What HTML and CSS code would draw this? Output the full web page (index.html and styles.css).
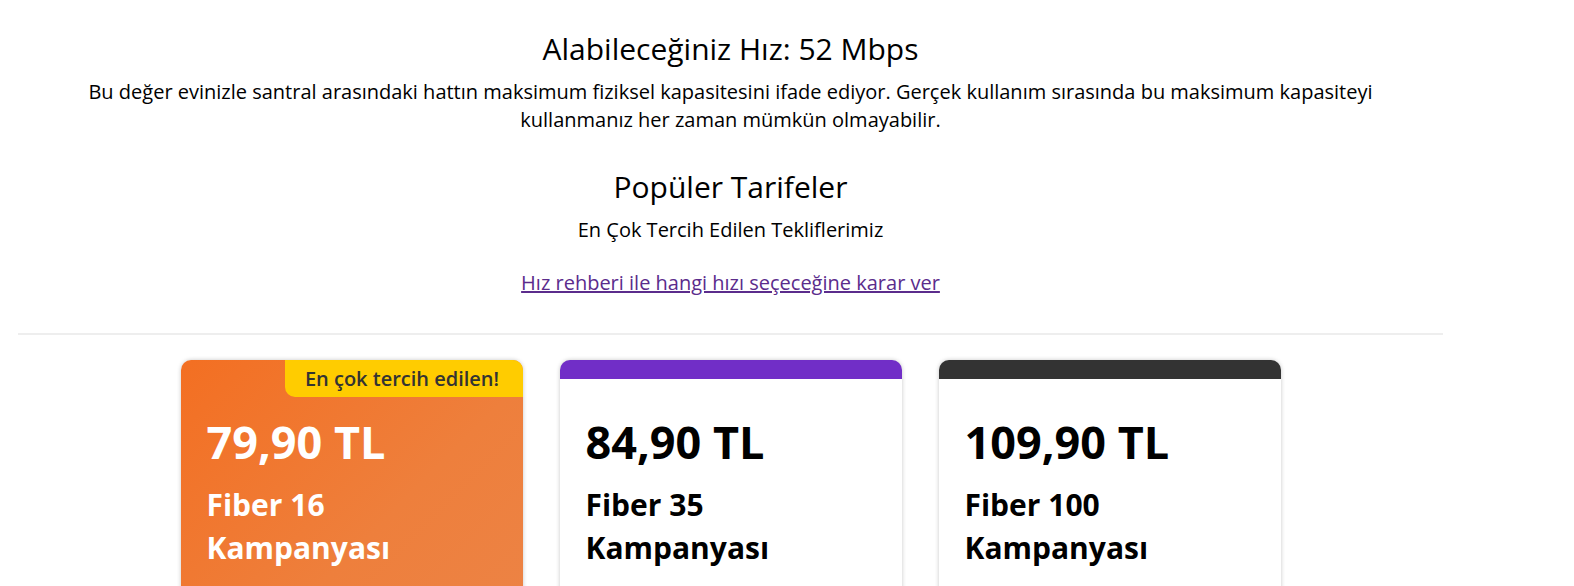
FILE: index.html
```html
<!DOCTYPE html>
<html lang="tr">
<head>
<meta charset="utf-8">
<title>Popüler Tarifeler</title>
<link rel="stylesheet" href="styles.css">
</head>
<body>
<div class="section">
  <h1 class="speed-title">Alabileceğiniz Hız: 52 Mbps</h1>
  <p class="speed-desc">Bu değer evinizle santral arasındaki hattın maksimum fiziksel kapasitesini ifade ediyor. Gerçek kullanım sırasında bu maksimum kapasiteyi kullanmanız her zaman mümkün olmayabilir.</p>
  <h2 class="pop-title">Popüler Tarifeler</h2>
  <p class="pop-sub">En Çok Tercih Edilen Tekliflerimiz</p>
  <p class="guide"><a class="guide-link" href="#">Hız rehberi ile hangi hızı seçeceğine karar ver</a></p>
  <hr class="divider">
  <div class="cards">
    <div class="card card-featured">
      <span class="badge">En çok tercih edilen!</span>
      <div class="card-body">
        <div class="price">79,90 TL</div>
        <div class="name">Fiber 16<br>Kampanyası</div>
      </div>
    </div>
    <div class="card card-purple">
      <div class="card-body">
        <div class="price">84,90 TL</div>
        <div class="name">Fiber 35<br>Kampanyası</div>
      </div>
    </div>
    <div class="card card-dark">
      <div class="card-body">
        <div class="price">109,90 TL</div>
        <div class="name">Fiber 100<br>Kampanyası</div>
      </div>
    </div>
  </div>
</div>
</body>
</html>
```

FILE: styles.css
```css
html, body {
  margin: 0;
  padding: 0;
  background: #fff;
  overflow: hidden;
}
body {
  font-family: "Open Sans", "Noto Sans", sans-serif;
  color: #000;
  height: 586px;
}
.section {
  width: 1425px;
  margin-left: 18px;
  text-align: center;
  padding-top: 28px;
}
.speed-title {
  font-size: 30px;
  font-weight: 400;
  line-height: 42px;
  margin: 0;
}
.speed-desc {
  font-size: 20px;
  line-height: 28px;
  max-width: 1320px;
  margin: 8px auto 0;
}
.pop-title {
  font-size: 30px;
  font-weight: 400;
  line-height: 42px;
  margin: 32px 0 0;
}
.pop-sub {
  font-size: 20px;
  line-height: 28px;
  margin: 8px 0 0;
}
.guide {
  font-size: 20px;
  line-height: 28px;
  margin: 25px 0 0;
}
.guide-link {
  color: #5b2c8c;
  text-decoration: underline;
}
.divider {
  border: 0;
  border-top: 2px solid #eeeeee;
  margin: 36px 0 0;
}
.cards {
  display: flex;
  gap: 37px;
  width: 1100px;
  margin: 25px auto 0;
  text-align: left;
}
.card {
  position: relative;
  width: 342px;
  height: 300px;
  border-radius: 10px;
  background: #fff;
  box-shadow: 0 0 4px rgba(0, 0, 0, 0.22);
  overflow: hidden;
  flex: none;
}
.card-purple { border-top: 19px solid #712ec7; }
.card-dark { border-top: 19px solid #333333; }
.card-featured {
  background: linear-gradient(135deg, #f36f22 0%, #ee7f3c 55%, #ec8447 100%);
  color: #fff;
  padding-top: 19px;
}
.badge {
  position: absolute;
  top: 0;
  right: 0;
  width: 238px;
  height: 37px;
  background: #ffcc00;
  color: #333;
  border-bottom-left-radius: 10px;
  font-size: 20px;
  font-weight: 600;
  line-height: 37px;
  text-align: center;
  box-sizing: border-box;
  padding-right: 3px;
}
.card-body {
  padding: 35px 25px 0 26px;
}
.price {
  font-size: 45px;
  font-weight: 700;
  line-height: 56px;
}
.name {
  font-size: 30px;
  font-weight: 700;
  line-height: 43px;
  margin-top: 13px;
}
```
